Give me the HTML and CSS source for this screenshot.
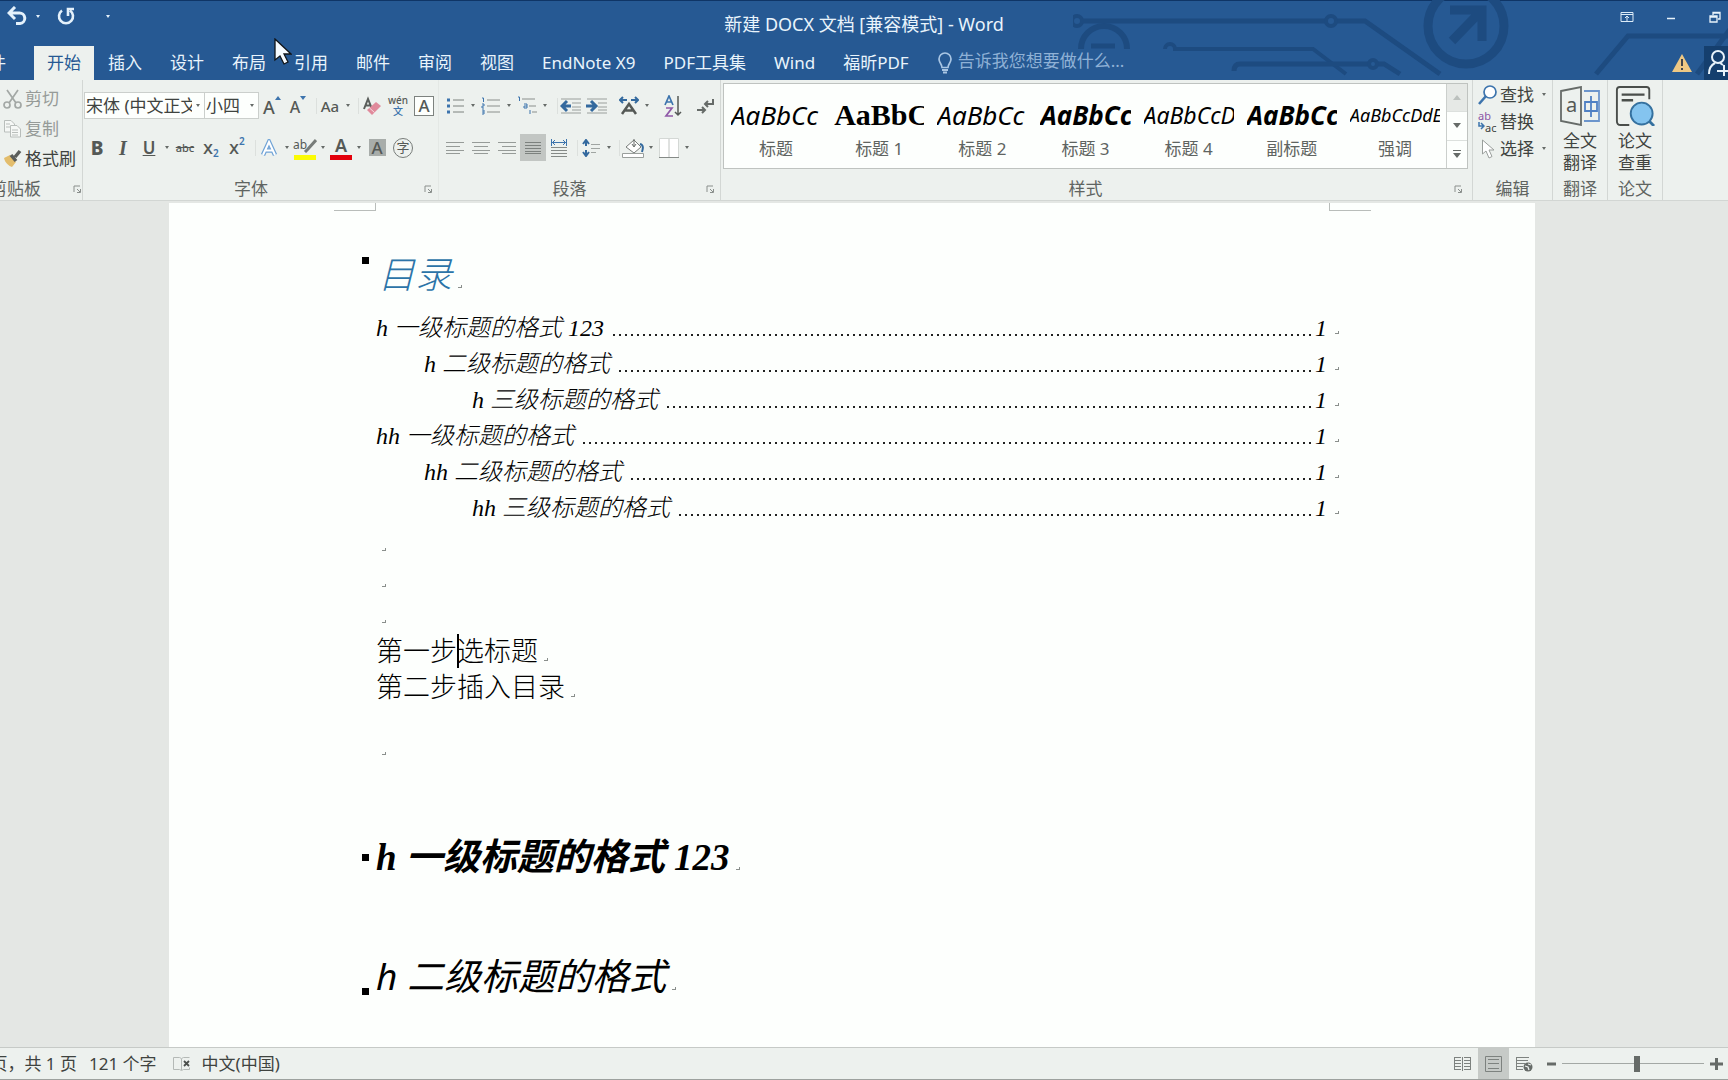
FILE: index.html
```html
<!DOCTYPE html>
<html lang="zh-CN">
<head>
<meta charset="utf-8">
<title>新建 DOCX 文档 [兼容模式] - Word</title>
<link rel="stylesheet" href="styles.css">
</head>
<body>
<header class="header">
  <svg class="circuit" width="655" height="80" viewBox="1070 0 655 80" fill="none" stroke="#1d4b80" stroke-width="5" aria-hidden="true">
    <circle cx="1074" cy="21" r="5" stroke-width="4"/>
    <path d="M1079 21H1323M1333 21H1362L1437 74"/>
    <circle cx="1328" cy="21" r="5" stroke-width="4"/>
    <path d="M1078 49a23 23 0 0 1 46 0" stroke-width="6"/>
    <path d="M1088 46h24" stroke-width="5"/>
    <path d="M1162 49a5 5 0 0 1 10 0H1310L1343 74" stroke-width="4"/>
    <path d="M1231 71q0-7 6-7H1365M1374 64H1381L1397 74" stroke-width="5"/>
    <circle cx="1370" cy="64" r="4" stroke-width="4"/>
    <circle cx="1463" cy="26" r="38" stroke-width="9"/>
    <path d="M1447 10H1479V41M1479 10L1449 41" stroke-width="9"/>
    <path d="M1593 74L1625 36H1728M1694 74L1728 28"/>
  </svg>
  <div class="titlebar">
    <div class="quick">
      <button class="qbtn" aria-label="撤消"><svg width="20" height="20" viewBox="0 0 20 20" fill="none" stroke="#e4f1fb" stroke-width="3"><path d="M2 7H12a5 5 0 0 1 1 10.500H9M8 1L2 7l6 6"/></svg></button>
      <button class="qcaret" aria-label="撤消列表"><span class="caret"></span></button>
      <button class="qbtn" aria-label="重复"><svg width="20" height="20" viewBox="0 0 20 20" fill="none" stroke="#e4f1fb" stroke-width="2.600"><path d="M6 4.500A7 7 0 1 0 14 4.500M12 10V3H18"/></svg></button>
      <button class="qcaret last" aria-label="自定义快速访问工具栏"><span class="caret"></span></button>
    </div>
    <div class="title">新建 DOCX 文档 [兼容模式] - Word</div>
    <div class="window-controls">
      <button aria-label="功能区显示选项"><svg width="14" height="12" viewBox="0 0 14 12" fill="none" stroke="#dcecf8"><path d="M1 1.500H13V10.500H1zM1 3.500H13M7 10V5M5 7l2-2 2 2"/></svg></button>
      <button aria-label="最小化"><svg width="14" height="12" viewBox="0 0 14 12"><path d="M3 7.500h8" stroke="#e8f3fb" stroke-width="1.500"/></svg></button>
      <button aria-label="还原"><svg width="14" height="12" viewBox="0 0 14 12" fill="none" stroke="#e8f3fb" stroke-width="1.300"><path d="M2 5H9V11H2zM2 6H9M5 4V1.500H12V8H10M5 2H12"/></svg></button>
    </div>
  </div>
  <div class="tabrow">
    <nav class="tabs">
      <button class="tab file">文件</button><button class="tab active">开始</button><button class="tab">插入</button><button class="tab">设计</button><button class="tab">布局</button><button class="tab">引用</button><button class="tab">邮件</button><button class="tab">审阅</button><button class="tab">视图</button><button class="tab">EndNote X9</button><button class="tab">PDF工具集</button><button class="tab">Wind</button><button class="tab">福昕PDF</button>
    </nav>
    <label class="tellme"><svg width="16" height="22" viewBox="0 0 16 22" fill="none" stroke="#a9c6e4" stroke-width="1.700"><path d="M5 15.500C5 12 2 11 2 7a6 6 0 0 1 12 0c0 4-3 5-3 8.500z"/><path d="M5 18h6M6 20.500h4" stroke-width="2"/></svg><input type="text" placeholder="告诉我您想要做什么..."></label>
    <div class="account">
      <svg width="20" height="19" viewBox="0 0 20 19"><path d="M10 0L20 18H0z" fill="#eec884"/><path d="M10 5v7M10 14v2" stroke="#41444a" stroke-width="2"/></svg>
      <button class="share" aria-label="共享"><svg width="24" height="28" viewBox="0 0 24 28" fill="none" stroke="#e8f3fb" stroke-width="2"><circle cx="12" cy="8" r="6"/><path d="M3 25c0-6 2-9 6-11M14 14l3 2M11 22H23M18 16v11"/></svg></button>
    </div>
  </div>
</header>

<section class="ribbon">
  <div class="group clipboard">
    <div class="stack tall">
      <button class="row-btn dim"><svg width="19" height="20" viewBox="0 0 19 20" fill="none" stroke="#a3a8a5" stroke-width="1.700"><path d="M4 1l9 13M15 1L6 14"/><circle cx="4" cy="16" r="3"/><circle cx="15" cy="16" r="3"/></svg>剪切</button>
      <button class="row-btn dim"><svg width="19" height="20" viewBox="0 0 19 20" fill="#f6f8f6" stroke="#b9bebb"><path d="M1.500 1.500H8L11.500 5V13H1.500z"/><path d="M7.500 6.500H14L17.500 10V18H7.500zM9 11h6M9 13.500h6M9 16h6M3 5h4M3 8h4"/></svg>复制</button>
      <button class="row-btn"><svg width="19" height="20" viewBox="0 0 19 20"><path d="M1 9L7 6l6 7-4 5C6 17 2 14 1 9z" fill="#e3bd6c"/><path d="M8 6l5 6M12 8l5-6" stroke="#5a5e5b" stroke-width="3.500"/></svg>格式刷</button>
    </div>
    <footer class="foot"><span class="label">剪贴板</span><button class="launch" aria-label="剪贴板设置"><svg width="9" height="9" viewBox="0 0 9 9"><path d="M1 7V1H7M4 4l3 3M7.500 4V7.500H4" fill="none" stroke="#8a8f8c"/></svg></button></footer>
  </div>

  <div class="group font">
    <div class="rows">
      <div class="row">
        <div class="combo name"><select aria-label="字体"><option>宋体 (中文正文)</option></select><span class="caret"></span></div>
        <div class="combo size"><select aria-label="字号"><option>小四</option></select><span class="caret"></span></div>
        <button class="ic grow" aria-label="增大字号">A<svg width="6" height="4" viewBox="0 0 6 4"><path d="M0 4l3-4 3 4z" fill="#3d74ad"/></svg></button>
        <button class="ic grow small" aria-label="缩小字号">A<svg width="6" height="4" viewBox="0 0 6 4"><path d="M0 0l3 4 3-4z" fill="#3d74ad"/></svg></button>
        <i class="sep"></i>
        <button class="ic aa">Aa</button><button class="drop" aria-label="更改大小写"><span class="caret"></span></button>
        <i class="sep"></i>
        <button class="ic" aria-label="清除格式"><svg width="20" height="20" viewBox="0 0 20 20"><path d="M2 13L6 3l4 10M3.500 9.500h5" fill="none" stroke="#5a5e5b" stroke-width="2"/><path d="M5 14l9-8 5 4-9 9z" fill="#e08a9b"/><path d="M7.500 12l5 4.500" stroke="#f6dbe0"/></svg></button>
        <button class="ic ruby" aria-label="拼音指南"><span>wén</span><span class="blue">文</span></button>
        <button class="ic"><span class="boxed">A</span></button>
      </div>
      <div class="row">
        <button class="ic b">B</button><button class="ic i">I</button><button class="ic u">U</button><button class="drop" aria-label="下划线"><span class="caret"></span></button>
        <button class="ic strike">abc</button><button class="ic x">X<sub>2</sub></button><button class="ic x">X<sup>2</sup></button>
        <i class="sep"></i>
        <button class="ic" aria-label="文本效果"><svg width="18" height="18" viewBox="0 0 18 18"><path d="M3 16L9 3l6 13M5.500 11.500h7" fill="none" stroke="#6fa3d6" stroke-width="4.500"/><path d="M3 16L9 3l6 13M5.500 11.500h7" fill="none" stroke="#fff" stroke-width="2"/></svg></button><button class="drop" aria-label="文本效果列表"><span class="caret"></span></button>
        <button class="ic colorbar yellow" aria-label="突出显示"><span>ab</span><svg width="14" height="14" viewBox="0 0 14 14"><path d="M13 1L5 10l-3 3" stroke="#777c79" stroke-width="3"/></svg></button><button class="drop" aria-label="突出显示颜色"><span class="caret"></span></button>
        <button class="ic colorbar red">A</button><button class="drop" aria-label="字体颜色"><span class="caret"></span></button>
        <button class="ic"><span class="shaded">A</span></button>
        <button class="ic"><span class="circled">字</span></button>
      </div>
    </div>
    <footer class="foot"><span class="label">字体</span><button class="launch" aria-label="字体设置"><svg width="9" height="9" viewBox="0 0 9 9"><path d="M1 7V1H7M4 4l3 3M7.500 4V7.500H4" fill="none" stroke="#8a8f8c"/></svg></button></footer>
  </div>

  <div class="group para">
    <div class="rows">
      <div class="row">
        <button class="ic" aria-label="项目符号"><svg width="18" height="18" viewBox="0 0 18 18"><path d="M1 3h3M1 9h3M1 15h3" stroke="#3d74ad" stroke-width="3"/><path d="M7 3h11M7 9h11M7 15h11" stroke="#7d827f"/></svg></button><button class="drop" aria-label="项目符号库"><span class="caret"></span></button>
        <button class="ic" aria-label="编号"><svg width="20" height="20" viewBox="0 0 20 20" fill="none"><path d="M1 2h1.500V6M1 8h2v2H1v2h2M1 14h2v4H1M1 16h2" stroke="#3d74ad"/><path d="M6 4h13M6 10h13M6 16h13" stroke="#8a8f8c"/></svg></button><button class="drop" aria-label="编号库"><span class="caret"></span></button>
        <button class="ic" aria-label="多级列表"><svg width="20" height="20" viewBox="0 0 20 20" fill="none"><path d="M1 1h1.500V5M7 8h3v4H7v-2h3M13 14v4" stroke="#3d74ad"/><path d="M5 3h13M12 10h7M15 16h5" stroke="#8a8f8c"/></svg></button><button class="drop" aria-label="多级列表库"><span class="caret"></span></button>
        <i class="sep wide"></i>
        <button class="ic" aria-label="减少缩进"><svg width="22" height="18" viewBox="0 0 22 18"><path d="M1 2h20M12 6h9M12 10h9M12 13h9M1 16h20" stroke="#9a9f9c"/><path d="M2 9h9M7 4L2 9l5 5" fill="none" stroke="#33699e" stroke-width="3"/></svg></button>
        <button class="ic" aria-label="增加缩进"><svg width="22" height="18" viewBox="0 0 22 18"><path d="M1 2h20M12 6h9M12 10h9M12 13h9M1 16h20" stroke="#9a9f9c"/><path d="M0 9h9M5 4l5 5-5 5" fill="none" stroke="#33699e" stroke-width="3"/></svg></button>
        <i class="space"></i>
        <button class="ic" aria-label="中文版式"><svg width="20" height="20" viewBox="0 0 20 20" fill="none"><path d="M1 4h7M4 1L1 4l3 3M12 4h7M16 1l3 3-3 3" stroke="#33699e" stroke-width="2"/><path d="M3 18l7-10 7 10M6 14.500h8" stroke="#555956" stroke-width="2.500"/></svg></button><button class="drop" aria-label="中文版式列表"><span class="caret"></span></button>
        <i class="space wide"></i>
        <button class="ic" aria-label="排序"><svg width="18" height="22" viewBox="0 0 18 22" fill="none"><path d="M1 10l4-9 4 9M2.500 7h5" stroke="#3d74ad" stroke-width="1.700"/><path d="M2 13h6l-6 8h7" stroke="#9059a8" stroke-width="1.700"/><path d="M14 1v19M11 17l3 3 3-3" stroke="#555956" stroke-width="1.500"/></svg></button>
        <i class="space"></i>
        <button class="ic" aria-label="显示编辑标记"><svg width="18" height="16" viewBox="0 0 18 16" fill="none" stroke="#666b68" stroke-width="2"><path d="M1 12h8M6 9l3 3-3 3M17 1v5H9M12 3L9 6l3 3"/></svg></button>
      </div>
      <div class="row">
        <button class="ic" aria-label="左对齐"><svg width="18" height="14" viewBox="0 0 18 14"><path d="M0 1.500h18M0 5.500h14M0 9.500h18M0 12.500h14" stroke="#969b98"/></svg></button>
        <button class="ic" aria-label="居中"><svg width="18" height="14" viewBox="0 0 18 14"><path d="M0 1.500h18M2 5.500h14M0 9.500h18M2 12.500h14" stroke="#969b98"/></svg></button>
        <button class="ic" aria-label="右对齐"><svg width="18" height="14" viewBox="0 0 18 14"><path d="M0 1.500h18M4 5.500h14M0 9.500h18M4 12.500h14" stroke="#969b98"/></svg></button>
        <button class="ic on" aria-label="两端对齐"><svg width="16" height="12" viewBox="0 0 16 12"><path d="M0 .5h16M0 3.500h16M0 6.500h16M0 9.500h16M0 11.500h16" stroke="#7c817e"/></svg></button>
        <button class="ic" aria-label="分散对齐"><svg width="16" height="18" viewBox="0 0 16 18" fill="none"><path d="M.5 0v7M15.500 0v7M1 3.500h14M4 1L1.500 3.500 4 6M12 1l2.500 2.500L12 6" stroke="#3d74ad"/><path d="M0 8.500h16M0 11.500h16M0 14.500h16M0 17.500h16" stroke="#858a87"/></svg></button>
        <i class="sep"></i>
        <button class="ic" aria-label="行距"><svg width="19" height="18" viewBox="0 0 19 18" fill="none"><path d="M4 2v5M1 5l3-4 3 4M4 11v5M1 13l3 4 3-4" stroke="#33699e" stroke-width="2"/><path d="M9 5.500h9M9 9.500h9M9 13.500h5" stroke="#a0a5a2"/></svg></button><button class="drop" aria-label="行距列表"><span class="caret"></span></button>
        <i class="sep"></i>
        <button class="ic" aria-label="底纹"><svg width="24" height="22" viewBox="0 0 24 22"><path d="M5 10l8-7 7 7-7 6z" fill="#fff" stroke="#777c79"/><path d="M13 2v7M11 7l2 3 2-3" fill="none" stroke="#666b68"/><path d="M19 7c4 1 3 5 2 8" fill="none" stroke="#33699e" stroke-width="2"/><path d="M1.500 16.500h21v4h-21z" fill="#fff" stroke="#9a9f9c"/></svg></button><button class="drop" aria-label="底纹颜色"><span class="caret"></span></button>
        <button class="ic" aria-label="边框"><svg width="20" height="20" viewBox="0 0 20 20"><path d="M.5.500h19v19H.500z" fill="#fff" stroke="#d4d8d5"/><path d="M10 1v18" stroke="#c0c4c1"/><path d="M0 19.500h20" stroke="#858a87"/></svg></button><button class="drop" aria-label="边框列表"><span class="caret"></span></button>
      </div>
    </div>
    <footer class="foot"><span class="label">段落</span><button class="launch" aria-label="段落设置"><svg width="9" height="9" viewBox="0 0 9 9"><path d="M1 7V1H7M4 4l3 3M7.500 4V7.500H4" fill="none" stroke="#8a8f8c"/></svg></button></footer>
  </div>

  <div class="group styles">
    <div class="gallery">
      <button class="style"><span class="preview it">AaBbCc</span><span class="sname">标题</span></button>
      <button class="style"><span class="preview serif">AaBbC</span><span class="sname">标题 1</span></button>
      <button class="style"><span class="preview it">AaBbCc</span><span class="sname">标题 2</span></button>
      <button class="style"><span class="preview it bold">AaBbCc</span><span class="sname">标题 3</span></button>
      <button class="style"><span class="preview it mid">AaBbCcD</span><span class="sname">标题 4</span></button>
      <button class="style"><span class="preview it bold">AaBbCc</span><span class="sname">副标题</span></button>
      <button class="style"><span class="preview it tiny">AaBbCcDdE</span><span class="sname">强调</span></button>
      <div class="spin">
        <button class="off" aria-label="上一行"><svg width="8" height="5" viewBox="0 0 8 5"><path d="M0 5l4-5 4 5z" fill="#bcc1be"/></svg></button>
        <button aria-label="下一行"><svg width="8" height="5" viewBox="0 0 8 5"><path d="M0 0l4 5 4-5z" fill="#666b68"/></svg></button>
        <button aria-label="其他"><svg width="8" height="8" viewBox="0 0 8 8"><path d="M0 3l4 5 4-5zM0 0h8v1H0z" fill="#666b68"/></svg></button>
      </div>
    </div>
    <footer class="foot"><span class="label">样式</span><button class="launch" aria-label="样式设置"><svg width="9" height="9" viewBox="0 0 9 9"><path d="M1 7V1H7M4 4l3 3M7.500 4V7.500H4" fill="none" stroke="#8a8f8c"/></svg></button></footer>
  </div>

  <div class="group edit">
    <div class="stack">
      <button class="row-btn"><svg width="19" height="20" viewBox="0 0 19 20" fill="none"><circle cx="12" cy="7" r="6" stroke="#3d74ad" stroke-width="1.700" fill="#fff"/><path d="M8 11l-7 8" stroke="#3d74ad" stroke-width="2.500"/></svg>查找<span class="caret"></span></button>
      <button class="row-btn"><span class="abac"><span class="purple">ab</span><span><svg width="7" height="8" viewBox="0 0 7 8" fill="none" stroke="#3d74ad" stroke-width="1.500"><path d="M1 0v4h5M3 1l3 3-3 3"/></svg>ac</span></span>替换</button>
      <button class="row-btn"><svg width="19" height="20" viewBox="0 0 19 20"><path d="M4.500 1v14l3.500-3 3 7 3-1.500-3-6.500h5z" fill="#fff" stroke="#9a9f9c"/></svg>选择<span class="caret"></span></button>
    </div>
    <footer class="foot"><span class="label">编辑</span></footer>
  </div>
  <div class="group big">
    <button class="big-btn"><svg width="40" height="40" viewBox="0 0 40 40" fill="none"><path d="M1 5L21 1v38L1 35z" stroke="#666b68" stroke-width="1.800"/><path d="M24 5h15v30H24" stroke="#6c95cc" stroke-width="1.800"/><path d="M25 16h12v9H25zM31 10v21" stroke="#4f80c4" stroke-width="1.800"/><text x="6" y="26" class="glyph">a</text></svg>全文<br>翻译</button>
    <footer class="foot"><span class="label">翻译</span></footer>
  </div>
  <div class="group big">
    <button class="big-btn"><svg width="40" height="42" viewBox="0 0 40 42" fill="none"><path d="M35 14V4q0-3-3-3H4Q1 1 1 4V37q0 4 4 4h9" stroke="#4a4e4b" stroke-width="2"/><path d="M6 9h24M6 15h12" stroke="#4a4e4b" stroke-width="2.500"/><path d="M33 35l7 7" stroke="#35719f" stroke-width="3"/><circle cx="27" cy="29" r="11.500" fill="#84c4ef" stroke="#35719f" stroke-width="2"/></svg>论文<br>查重</button>
    <footer class="foot"><span class="label">论文</span></footer>
  </div>
</section>

<main class="workspace">
  <article class="page">
    <div class="corners"><span class="corner left"></span><span class="corner right"></span></div>
    <h1 class="toc-title">目录<span class="mark"></span></h1>
    <ol class="toc">
      <li><a href="#s1">h 一级标题的格式 123</a><span class="dots"></span><em>1</em><span class="mark"></span></li>
      <li class="l2"><a href="#s2">h 二级标题的格式</a><span class="dots"></span><em>1</em><span class="mark"></span></li>
      <li class="l3"><a href="#s2">h 三级标题的格式</a><span class="dots"></span><em>1</em><span class="mark"></span></li>
      <li><a href="#s1">hh 一级标题的格式</a><span class="dots"></span><em>1</em><span class="mark"></span></li>
      <li class="l2"><a href="#s2">hh 二级标题的格式</a><span class="dots"></span><em>1</em><span class="mark"></span></li>
      <li class="l3"><a href="#s2">hh 三级标题的格式</a><span class="dots"></span><em>1</em><span class="mark"></span></li>
    </ol>
    <p class="empty"><span class="mark"></span></p>
    <p class="empty"><span class="mark"></span></p>
    <p class="empty"><span class="mark"></span></p>
    <p class="step">第一步<span class="insertion"></span>选标题<span class="mark"></span></p>
    <p class="step">第二步插入目录<span class="mark"></span></p>
    <p class="empty after"><span class="mark"></span></p>
    <h1 class="h-one" id="s1">h 一级标题的格式 123<span class="mark"></span></h1>
    <h2 class="h-two" id="s2">h 二级标题的格式<span class="mark"></span></h2>
  </article>
</main>

<footer class="status">
  <span class="pages">第 1 页，共 1 页</span>
  <span class="words">121 个字</span>
  <svg class="proof" width="17" height="16" viewBox="0 0 17 16" fill="none" stroke="#b4b9b6"><path d="M.5 1.500h6l2 1 2-1h6M.5 1.500v12h6l2 1 2-1h6v-2M8.500 3v11"/><path d="M11 5l5 5M16 5l-5 5" stroke="#4a4e4b" stroke-width="1.800"/></svg>
  <span>中文(中国)</span>
  <div class="views">
    <button aria-label="阅读视图"><svg width="17" height="16" viewBox="0 0 17 16" fill="none" stroke="#7d827f"><path d="M8.500 1v14M1 1.500h6M1 4.500h6M1 7.500h6M1 10.500h6M1 13.500h6M10 1.500h6M10 4.500h6M10 7.500h6M10 10.500h6M10 13.500h6M.5 1v13M16.500 1v13"/></svg></button>
    <button class="on" aria-label="页面视图"><svg width="17" height="16" viewBox="0 0 17 16" fill="none" stroke="#7d827f"><path d="M.5.500h16v15H.500zM3 3.500h11M3 7.500h11M3 12.500h11"/></svg></button>
    <button aria-label="Web 版式视图"><svg width="17" height="16" viewBox="0 0 17 16" fill="none" stroke="#7d827f"><path d="M0 1.500h13M1 4.500h11M1 7.500h8M1 10.500h6M1 13.500h6M.5 1v13"/><circle cx="12" cy="11" r="4.500" fill="#666b68" stroke="none"/><path d="M9 10l3 1 1 3M12 8l3 1" stroke="#edf1ee" stroke-width="1.300"/></svg></button>
  </div>
  <div class="zoom">
    <button aria-label="缩小"><svg width="9" height="14" viewBox="0 0 9 14"><path d="M0 7h9" stroke="#666b68" stroke-width="3"/></svg></button>
    <input type="range" min="0" max="100" value="53" aria-label="显示比例">
    <button aria-label="放大"><svg width="13" height="14" viewBox="0 0 13 14"><path d="M0 7h13M6.500 1v12" stroke="#666b68" stroke-width="3"/></svg></button>
  </div>
</footer>
<svg class="pointer" width="18" height="28" viewBox="0 0 18 28"><path d="M1 1v21l5-4 4 8 4-2-4-8h7z" fill="#f6fbff" stroke="#101418" stroke-width="1.300"/></svg>
</body>
</html>
```
FILE: styles.css
```css
* { box-sizing: border-box; }
body {
  margin: 0;
  height: 100vh;
  display: flex;
  flex-direction: column;
  overflow: hidden;
  background: #e4e7e4;
  color: #3f4340;
  font: 17px/22px "Noto Sans", "Noto Sans CJK SC", sans-serif;
}
button {
  margin: 0;
  padding: 0;
  border: 0;
  background: none;
  color: inherit;
  font: inherit;
  white-space: nowrap;
}
svg { flex: none; display: block; }
.caret {
  flex: none;
  width: 0;
  height: 0;
  border: 2px solid transparent;
  border-top: 3px solid #666b68;
  border-bottom: 0;
}

/* Header */
.header {
  position: relative;
  flex: none;
  background: #265993;
  border-top: 1px solid #0f3566;
  color: #e9f4fc;
}
.circuit { position: absolute; right: 0; top: -1px; }
.titlebar {
  position: relative;
  display: grid;
  grid-template-columns: 1fr auto 1fr;
  height: 45px;
}
.quick { display: flex; align-items: center; height: 30px; padding-left: 7px; }
.qbtn { width: 20px; }
.qcaret { width: 29px; display: flex; justify-content: center; padding-right: 8px; }
.qcaret.last { width: 64px; padding: 0; }
.quick .caret { border-top-color: #e4f1fb; }
.title { padding-top: 12px; font-size: 18px; }
.window-controls {
  display: flex;
  justify-content: flex-end;
  gap: 30px;
  height: 32px;
  padding-right: 6px;
}
.tabrow { position: relative; display: flex; height: 34px; overflow: hidden; }
.tabs { display: flex; margin-left: -42px; }
.tab { padding: 0 14px; flex: none; }
.tab.file { padding-right: 28px; }
.tab.active { padding: 0 13px; background: #edf1ee; color: #265993; }
.tellme { display: flex; align-items: center; gap: 5px; margin-left: 14px; flex: 1; }
.tellme input {
  flex: 1;
  min-width: 0;
  padding: 0 0 4px;
  border: 0;
  background: none;
  font: inherit;
  color: #e9f4fc;
}
.tellme input::placeholder { color: #8fb1d6; opacity: 1; }
.account { display: flex; align-items: center; gap: 12px; }
.share { width: 24px; height: 34px; padding-left: 2px; background: #153f6e; overflow: hidden; }

/* Ribbon */
.ribbon {
  flex: none;
  display: flex;
  height: 121px;
  background: #edf1ee;
  border-bottom: 1px solid #d2d6d3;
  overflow: hidden;
}
.group {
  flex: none;
  display: flex;
  flex-direction: column;
  justify-content: space-between;
  border-right: 1px solid #d3d7d4;
}
.foot { display: flex; align-items: center; height: 22px; color: #5f6461; }
.foot .label { flex: 1; text-align: center; }
.launch { width: 20px; display: flex; justify-content: center; }
.clipboard { width: 83px; }
.clipboard .foot { justify-content: flex-end; gap: 32px; }
.clipboard .launch { justify-content: flex-start; }
.clipboard .label { flex: none; }
.stack { display: flex; flex-direction: column; padding: 1px 0 0 5px; }
.stack .row-btn { height: 27px; }
.stack.tall { padding: 4px 0 0 3px; }
.tall .row-btn { height: 30px; }
.row-btn { display: flex; align-items: center; gap: 3px; }
.row-btn .caret { margin-left: 5px; }
.dim { color: #969b98; }
.rows { display: flex; flex-direction: column; gap: 15px; padding-top: 12px; }
.row { display: flex; height: 27px; }
.font { width: 356px; padding-left: 1px; border-color: #e4e8e5; }
.para { width: 282px; }
.para .rows { padding-left: 3px; }
.ic {
  position: relative;
  width: 26px;
  height: 27px;
  flex: none;
  display: flex;
  align-items: center;
  justify-content: center;
  color: #555956;
  font-weight: 500;
}
.ic.on { background: #c2c6c3; }
.drop { width: 10px; flex: none; display: flex; align-items: center; justify-content: center; }
.sep { flex: none; width: 6px; height: 16px; margin-top: 6px; border-right: 1px solid #dce0dd; }
.sep.wide { width: 8px; }
.space { flex: none; width: 6px; }
.space.wide { width: 8px; }
.combo {
  display: flex;
  align-items: center;
  background: #fdfffd;
  border: 1px solid #cbcfcc;
}
.combo select {
  flex: 1;
  min-width: 0;
  padding: 0 0 0 1px;
  border: 0;
  appearance: none;
  background: none;
  color: #3f4340;
  font: inherit;
  overflow: hidden;
}
.combo .caret { margin: 0 4px; }
.combo.name { width: 121px; }
.combo.size { width: 54px; border-left: 0; }
.grow { font-size: 18px; align-items: flex-start; padding-top: 4px; }
.grow.small { font-size: 16px; }
.aa { font-size: 15px; }
.ruby { flex-direction: column; font-size: 10px; line-height: 11px; }
.blue { color: #3d74ad; }
.boxed { width: 20px; line-height: 18px; border: 1px solid #7d827f; background: #fdfffd; }
.b { font-weight: 800; font-size: 19px; }
.i { font: italic bold 20px/22px "Liberation Serif", serif; }
.u { font-weight: 600; text-decoration: underline; }
.strike { font-size: 11px; text-decoration: line-through; }
.x { font-size: 15px; font-weight: 600; }
.x sub, .x sup { font-size: 10px; color: #3d74ad; line-height: 10px; }
.x sub { align-self: flex-end; padding-bottom: 3px; }
.x sup { align-self: flex-start; padding-top: 2px; }
.colorbar { height: 26px; font-size: 18px; font-weight: 600; align-items: flex-start; }
.colorbar::after { content: ""; position: absolute; left: 2px; right: 2px; bottom: 0; height: 5px; }
.yellow { font-size: 12px; font-weight: 400; }
.yellow svg { margin: 5px 0 0 -4px; }
.yellow::after { background: #fbfb05; }
.red::after { background: #e3000b; }
.shaded { width: 17px; line-height: 17px; background: #a8adaa; }
.circled {
  width: 20px;
  height: 20px;
  border: 1px solid #777c79;
  border-radius: 50%;
  font-size: 13px;
  line-height: 17px;
  font-weight: 400;
}

.styles { width: 752px; flex: 0 1 752px; padding: 3px 4px 0 2px; }
.gallery {
  display: flex;
  height: 86px;
  background: #fdfffd;
  border: 1px solid #bfc3c0;
}
.style {
  flex: 1;
  min-width: 0;
  display: flex;
  flex-direction: column;
  justify-content: space-between;
  padding: 12px 6px 8px 7px;
}
.preview {
  align-self: stretch;
  height: 36px;
  overflow: hidden;
  color: #000;
  text-align: left;
  font-size: 26px;
  line-height: 38px;
}
.it { font-style: italic; }
.serif { font-family: "Liberation Serif", serif; font-weight: 700; font-size: 30px; }
.bold { font-weight: 700; }
.mid { font-size: 23px; }
.tiny { font-size: 18px; }
.sname { color: #5f6461; }
.spin { width: 21px; flex: none; display: flex; flex-direction: column; border-left: 1px solid #cbcfcc; }
.spin button { flex: 1; display: flex; align-items: center; justify-content: center; }
.spin button + button { border-top: 1px solid #dce0dd; }
.off { background: #e6e9e6; }

.edit { width: 80px; }
.abac { width: 19px; display: flex; flex-direction: column; font-size: 11px; line-height: 12px; }
.abac span { display: flex; }
.purple { color: #8a55a5; }
.big { width: 55px; }
.big-btn { padding-top: 6px; text-align: center; }
.big-btn svg { margin: 0 auto 4px; height: 40px; }
.glyph { font-size: 20px; fill: #555956; }

/* Document */
.workspace {
  flex: 1;
  min-height: 0;
  display: flex;
  justify-content: center;
  padding: 2px 24px 0 0;
  overflow: hidden;
}
.page {
  width: 100%;
  max-width: 1366px;
  padding: 0 206px 0 207px;
  background: #fdfffd;
  color: #000;
  font-family: "Liberation Serif", "Noto Sans CJK SC", serif;
}
.corners { display: flex; justify-content: space-between; margin: 0 -42px; height: 8px; }
.corner { width: 42px; border: 0 solid #b9bdba; border-bottom-width: 1px; }
.corner.left { border-right-width: 1px; }
.corner.right { border-left-width: 1px; }
.page h1, .page h2, .page p, .toc { margin: 0; padding: 0; font-weight: 300; }
.mark {
  display: inline-block;
  width: 4px;
  height: 3px;
  margin-left: 6px;
  border: 0 solid #8a8f8c;
  border-width: 0 1px 1px 0;
}
.toc-title, .h-one, .h-two { position: relative; font-style: italic; font-size: 37px; line-height: 48px; }
.toc-title::before, .h-one::before, .h-two::before {
  content: "";
  position: absolute;
  left: -14px;
  top: 20px;
  width: 7px;
  height: 7px;
  background: #000;
}
.page .toc-title { padding: 41px 0 10px 2px; color: #2c74a8; }
.toc-title::before { top: 46px; }
.toc { list-style: none; font-style: italic; font-size: 24px; line-height: 36px; }
.toc li { display: flex; height: 36px; margin-right: -10px; }
.toc a { color: inherit; text-decoration: none; white-space: pre; }
.toc .l2 { padding-left: 48px; }
.toc .l3 { padding-left: 96px; }
.toc .mark { align-self: flex-end; margin-bottom: 12px; margin-left: 8px; }
.dots {
  flex: 1;
  height: 2px;
  margin: 24px 4px 0 6px;
  background: repeating-linear-gradient(to left, #222 0 2px, transparent 2px 6px);
}
.empty { height: 36px; line-height: 40px; }
.step { height: 36px; font-size: 27px; line-height: 36px; }
.insertion {
  display: inline-block;
  width: 2px;
  height: 34px;
  margin: -6px -2px -6px 0;
  vertical-align: -1px;
  background: #000;
}
.page .after { height: 128px; padding-top: 24px; }
.page .h-one { font-weight: 700; }
.page .h-two { margin-top: 70px; font-family: "Noto Sans", "Noto Sans CJK SC", sans-serif; font-weight: 400; }
.h-two::before { top: 36px; }

/* Status bar */
.status {
  flex: none;
  display: flex;
  align-items: center;
  height: 33px;
  background: #edf1ee;
  border-top: 1px solid #c6cac7;
  border-bottom: 1px solid #9da19e;
}
.pages { width: 77px; display: flex; justify-content: flex-end; white-space: pre; overflow: hidden; }
.words { margin-left: 12px; }
.proof { margin: 0 12px 0 16px; }
.views { display: flex; align-self: stretch; margin-left: auto; }
.views button { width: 31px; display: flex; align-items: center; justify-content: center; }
.views .on { background: #c6cac7; }
.zoom { display: flex; align-items: center; gap: 6px; padding: 0 5px 0 7px; }
.zoom input { width: 142px; height: 16px; margin: 0; appearance: none; background: linear-gradient(#a3a8a5, #a3a8a5) center / 100% 1px no-repeat; }
.zoom input::-webkit-slider-thumb { appearance: none; width: 6px; height: 16px; background: #666b68; }

.pointer { position: absolute; left: 274px; top: 38px; }
```
